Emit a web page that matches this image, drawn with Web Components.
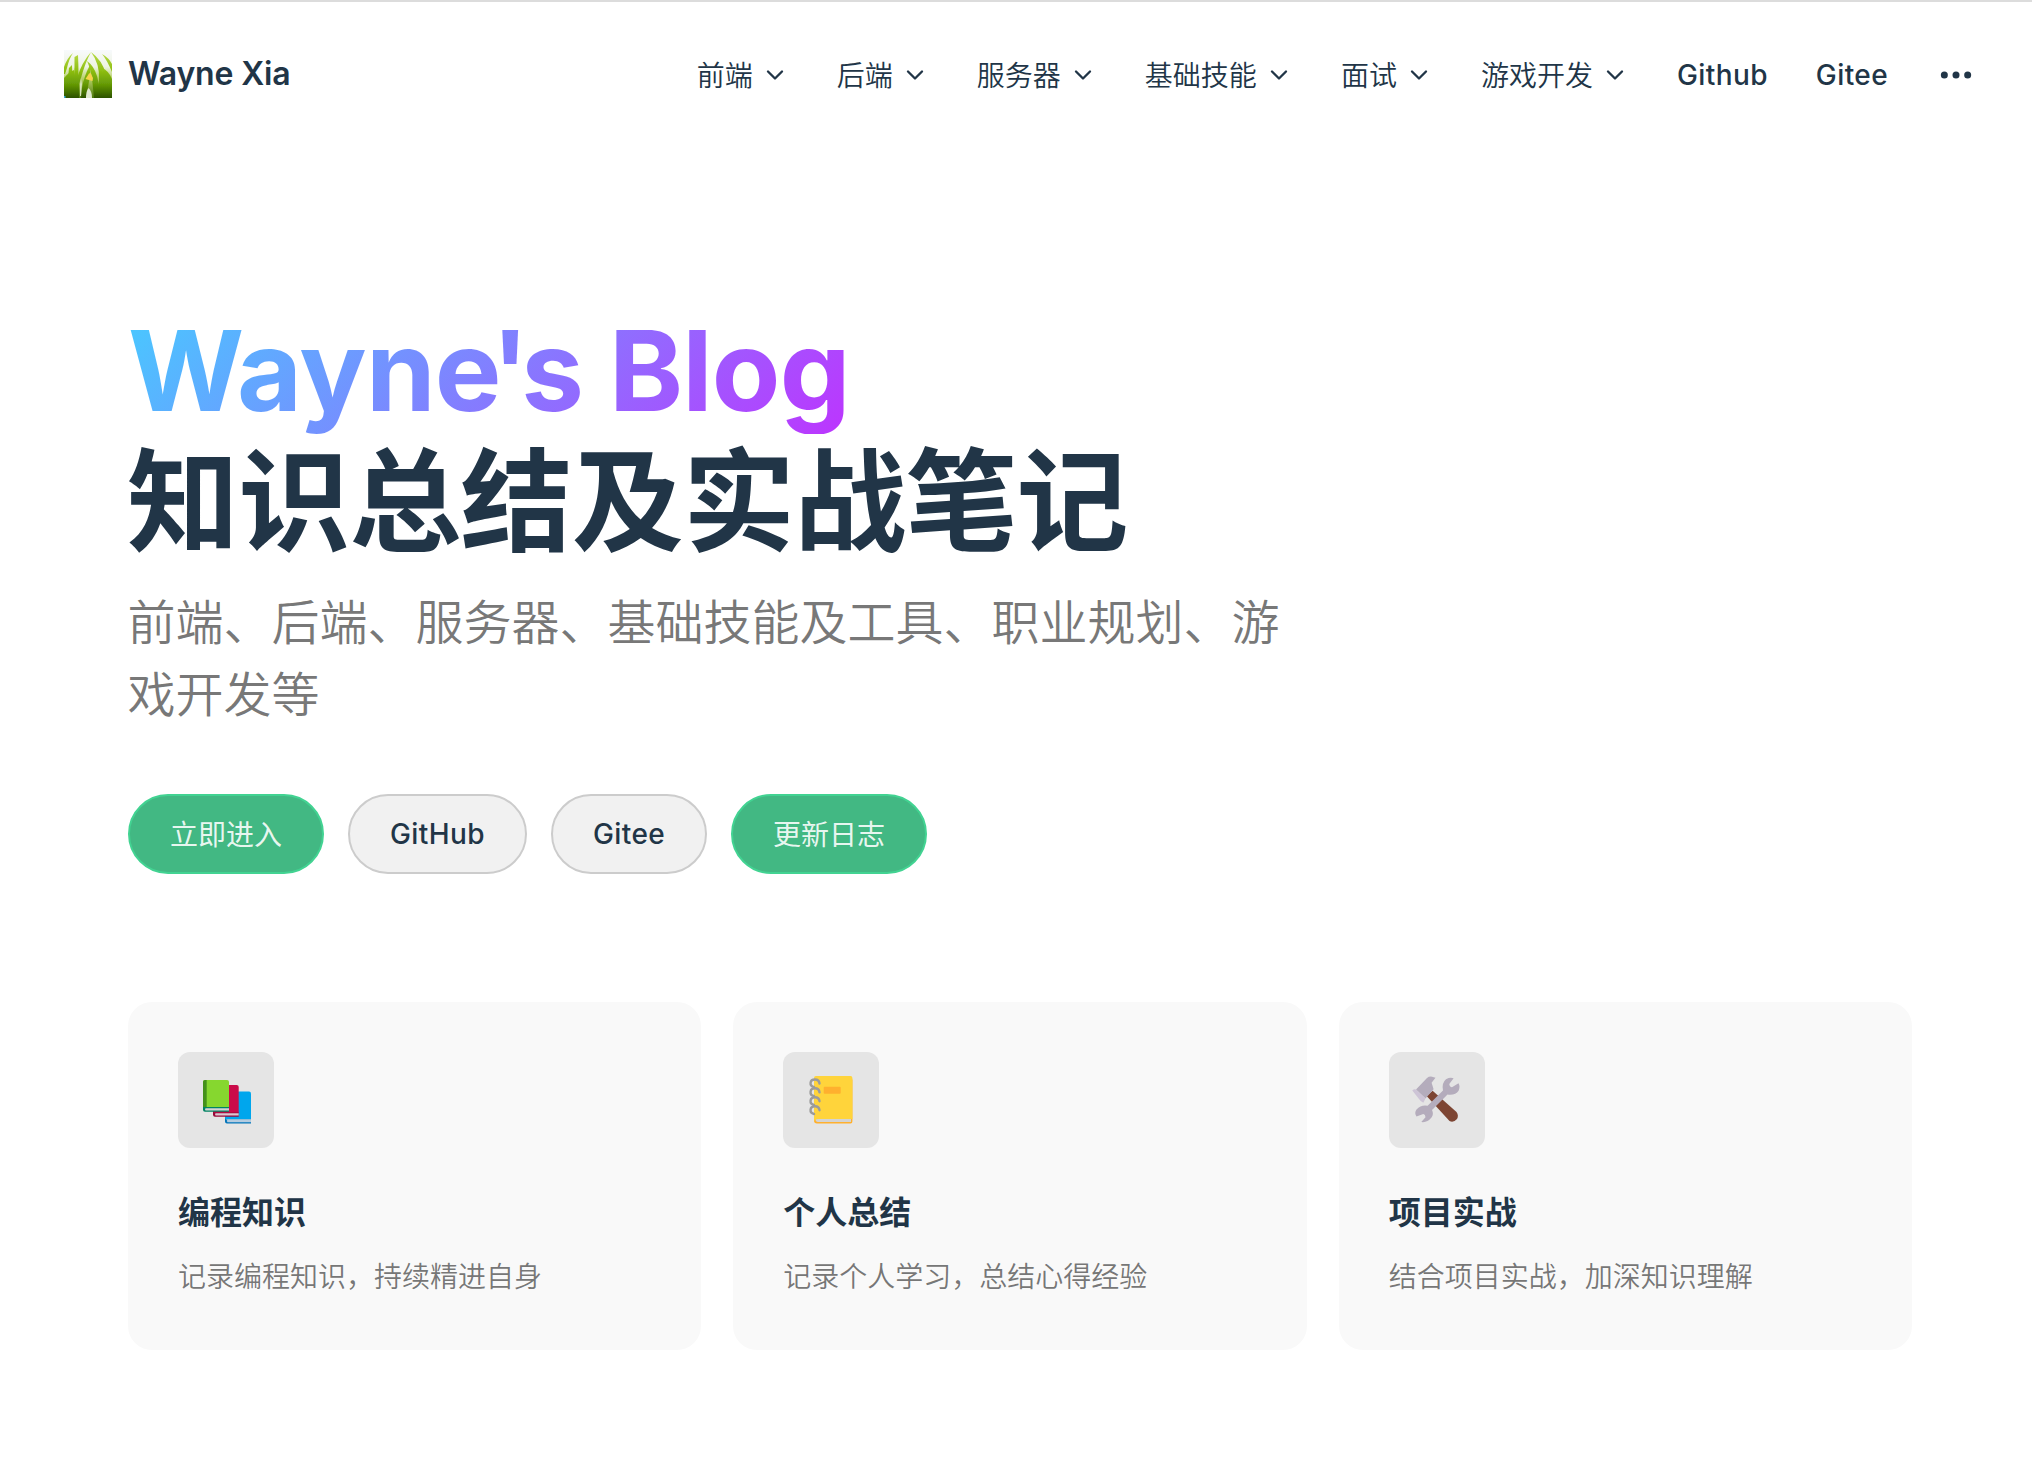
<!DOCTYPE html>
<html lang="zh-CN">
<head>
<meta charset="utf-8">
<title>Wayne Xia</title>
<style>
html,body{margin:0;background:#fff}
body{font-family:Inter,"Noto Sans CJK SC",sans-serif;color:#213547;font-size:28px;-webkit-font-smoothing:antialiased}
</style>
</head>
<body>
<blog-page></blog-page>
<script>
const define=(name,html,setup)=>customElements.define(name,class extends HTMLElement{
  constructor(){super();this.attachShadow({mode:'open'}).innerHTML=html;}
  connectedCallback(){if(setup)setup(this,this.shadowRoot);}
});

define('grass-logo',`<style>:host{display:block;width:48px;height:48px}svg{display:block}</style>
<svg width="48" height="48" viewBox="0 0 48 48">
<defs><linearGradient id="g" gradientUnits="userSpaceOnUse" x1="0" y1="2" x2="0" y2="48"><stop offset="0" stop-color="#b9dc4a"/><stop offset=".4" stop-color="#8fbf12"/><stop offset=".7" stop-color="#659a06"/><stop offset="1" stop-color="#2c5200"/></linearGradient>
<linearGradient id="h" x1="0" y1="0" x2="0" y2="1"><stop offset="0" stop-color="#f8fafc"/><stop offset=".35" stop-color="#eef4e2"/><stop offset=".6" stop-color="#b5d064"/><stop offset="1" stop-color="#4d7a0c"/></linearGradient>
<filter id="b" x="0" y="0" width="1" height="1"><feGaussianBlur stdDeviation=".6"/></filter></defs>
<rect width="48" height="48" fill="url(#h)"/>
<g fill="url(#g)" filter="url(#b)">
<path d="M0 17Q3 8 9 3Q5 9 3 18L1 24H0Z"/>
<path d="M0 48V28Q5 22 10 20L12 48Z"/>
<path d="M7 48Q11 28 10.500 7L14 5Q15 24 14 48Z"/>
<path d="M13 28Q18 12 27 2Q21 13 17 28L15 34V48H12Z"/>
<path d="M2 48L5 18L8 15L9 48Z"/>
<path d="M18 38Q20 26 26 15L26.500 22Q25 32 22 48H17Z"/>
<path d="M30 48L28 28Q26 17 23 11Q30 16 33 26L38 48Z"/>
<path d="M35 30Q36 14 27 2Q38 10 42 24L46 48H33Z"/>
<path d="M38 48V18Q45 21 48 29V48Z"/>
<path d="M48 22Q43 10 38 4Q45 8 48 14Z"/>
</g>
<path d="M22 48Q22 41 24.500 38Q28 41 28 48Z" fill="#dfe8ce" filter="url(#b)"/>
<path d="M16 34L17 28L18 34L17 46L16 46Z" fill="#d5e3b8" filter="url(#b)"/>
<path d="M25 23.500L26.500 23L29 28L28.500 31L25 30L21.500 29Z" fill="#f7d34a"/>
<path d="M0 46H1.500V48H0Z" fill="#35a9d6"/>
</svg>`);

define('site-brand',`<style>:host{display:flex;align-items:center;gap:16px;font-size:32px;font-weight:580;letter-spacing:-.15px;line-height:48px}</style><grass-logo></grass-logo><span><slot></slot></span>`);

define('nav-item',`<style>:host{display:flex;align-items:center;gap:8px;line-height:48px;font-size:28px;font-weight:450;letter-spacing:.4px;white-space:nowrap}
:host([menu]) .label{font-weight:350;letter-spacing:0;padding-top:1px;margin-bottom:-1px}svg{display:none;width:28px;height:28px}:host([menu]) svg{display:block}</style>
<span class="label"><slot></slot></span>
<svg viewBox="0 0 24 24"><path d="M6 9l6 6 6-6" fill="none" stroke="#213547" stroke-width="2" stroke-linecap="round" stroke-linejoin="round"/></svg>`);

define('more-menu',`<style>:host{display:flex;align-items:center}svg{display:block}</style>
<svg width="40" height="40" viewBox="0 0 24 24" fill="#213547"><circle cx="12" cy="12" r="2.100"/><circle cx="19" cy="12" r="2.100"/><circle cx="5" cy="12" r="2.100"/></svg>`);

define('site-nav',`<style>:host{display:flex;align-items:center;justify-content:space-between;height:144px;padding:0 56px 0 64px;box-sizing:border-box}
nav{display:flex;align-items:center;gap:48px;padding-top:2px}</style>
<site-brand>Wayne Xia</site-brand>
<nav><nav-item menu>前端</nav-item><nav-item menu>后端</nav-item><nav-item menu>服务器</nav-item><nav-item menu>基础技能</nav-item><nav-item menu>面试</nav-item><nav-item menu>游戏开发</nav-item><nav-item>Github</nav-item><nav-item>Gitee</nav-item><more-menu></more-menu></nav>`);

define('hero-button',`<style>:host{display:flex;align-items:center;justify-content:center;box-sizing:border-box;height:80px;padding:0 40px;border:2px solid #ccc;border-radius:40px;background:#f1f1f1;font-size:28px;font-weight:450;letter-spacing:.4px;line-height:76px;white-space:nowrap}
:host([brand]){background:#42b883;border-color:#42d392;color:rgba(255,255,255,.9);font-weight:400;letter-spacing:0}:host([brand]) span{margin-top:2px}</style><span><slot></slot></span>`);

define('hero-section',`<style>:host{display:block}
h1,p{margin:0}h1{font-size:112px;line-height:128px;font-weight:700;letter-spacing:-.8px}
h1>span{display:block;width:fit-content}
.name{background:linear-gradient(-45deg,#bd34fe,#47caff);-webkit-background-clip:text;background-clip:text;-webkit-text-fill-color:transparent}
.before{letter-spacing:-8px}.quote{letter-spacing:-8px}
.headline{padding-top:4px;margin:0 0 -4px -1px}
p{width:1154px;margin-left:-.5px;padding-top:25px;margin-bottom:-1px;font-size:48px;line-height:72px;font-weight:350;color:rgba(60,60,60,.7)}
div{display:flex;gap:24px;padding-top:64px}</style>
<h1><span class="name">Wayn<span class="before">e</span><span class="quote">'</span>s Blog</span><span class="headline">知识总结及实战笔记</span></h1>
<p>前端、后端、服务器、基础技能及工具、职业规划、游戏开发等</p>
<div><hero-button brand>立即进入</hero-button><hero-button>GitHub</hero-button><hero-button>Gitee</hero-button><hero-button brand>更新日志</hero-button></div>`);

const icons={
books:`<path d="M26 18.500H48Q50 18.500 50 20.500V46H24V20.500Q24 18.500 26 18.500Z" fill="#00a6ed"/><path d="M24 44Q24 46.500 26 46.500H50V50.500H26Q24 50.500 24 48.500Z" fill="#0074ba"/><path d="M26.500 46.500H50V49.300H26.500Q25 48 26.500 46.500Z" fill="#b4cce0"/>
<path d="M14 12H35.700Q37.700 12 37.700 14V40H12V14Q12 12 14 12Z" fill="#ca0b4a"/><path d="M12 38Q12 39.500 14 39.500H37.700V43.700H14Q12 43.700 12 41.700Z" fill="#990838"/><path d="M14.500 40.200H37.700V42.500H14.500Q13.500 41.300 14.500 40.200Z" fill="#dcc6d0"/>
<path d="M4 7H26Q28 7 28 9V34.500H2V9Q2 7 4 7Z" fill="#86d72f"/><path d="M4 7H5.700V35H2V9Q2 7 4 7Z" fill="#44911b"/><path d="M2 34H28V38.700H4Q2 38.700 2 36.700Z" fill="#008463"/><path d="M4.500 35.200H28V37.600H4.500Q3.500 36.500 4.500 35.200Z" fill="#d3d3d3"/>`,
note:`<path d="M8 5H44.500Q46.400 5 46.400 7V48.500Q46.400 50.400 44.500 50.400H11Q8 50.400 8 47.500Z" fill="#ffb02e"/><path d="M9.500 46H45V49H12Q9.500 49 9.500 46Z" fill="#d3d3d3"/><path d="M8 5Q8 3 10 3H44.500Q46.400 3 46.400 5V46H12Q9.500 46 8.500 48L8 46Z" fill="#ffd43b"/><rect x="17.700" y="13.700" width="17" height="7" rx="1" fill="#ffb02e"/><g transform="translate(1 0)" fill="none" stroke="#9b9b9b" stroke-width="2.400" stroke-linecap="round"><path d="M7 14C2 13 2.500 6.500 8 6.500Q12 6.500 12.500 10.500"/><path d="M7 23C2 22 2.500 15.300 8 15.300Q12 15.300 12.500 19.300"/><path d="M7 32C2 31 2.500 24.200 8 24.200Q12 24.200 12.500 28.200"/><path d="M7 41C2 40 2.500 33.200 8 33.200Q12 33.200 12.500 37.200"/></g>`,
tools:`<path d="M15.600 23L21.600 17.700L45.500 39Q48 42.500 46 46Q42.500 50 38.500 48Z" fill="#7d4533"/><path d="M5 16.500L16 5Q18 3.300 21 3.700L24.500 4.700L20.600 9.700L22.600 16.300L14.500 25.500Z" fill="#b4acbc"/><path d="M1.300 17.500Q3 15.500 5 16.500L14.500 25.500L12.300 29.700Q10 29 8 26Z" fill="#cdc4d6"/><path d="M16.600 32.700L32 17.500Q30.500 10 35 6.300Q39 4 42.600 5.300L38.300 11Q38.500 14 41 14.300L47.500 10.300Q49.500 13.500 47.600 17.700Q44.500 22.500 36.500 21.500L21 37Q23 41 20.500 44.500Q16 50 10.300 49L14.500 44.300Q14.500 41.500 12.300 41L5.500 43.500Q3 40 5.500 36.500Q10 31.500 16.600 32.700Z" fill="#b4acbc"/>`
};
define('feature-card',`<style>:host{display:block;flex:1 1 0;box-sizing:border-box;height:348px;padding:50px;border-radius:24px;background:#f9f9f9}
.icon{display:flex;align-items:center;justify-content:center;width:96px;height:96px;border-radius:12px;background:#e5e5e5}
.icon svg{margin-right:1px}
h2{margin:41px 0 0;font-size:32px;line-height:48px;font-weight:700}
p{margin:0;padding-top:16px;font-size:28px;line-height:48px;font-weight:350;color:rgba(60,60,60,.7)}</style>
<div class="icon"></div><h2><slot name="title"></slot></h2><p><slot></slot></p>`,
(el,root)=>{root.querySelector('.icon').innerHTML='<svg width="50" height="54" viewBox="0 0 50 54" style="overflow:visible">'+icons[el.getAttribute('icon')]+'</svg>';});

define('feature-list',`<style>:host{display:flex;gap:32px;padding-top:128px}</style>
<feature-card icon="books"><span slot="title">编程知识</span>记录编程知识，持续精进自身</feature-card>
<feature-card icon="note"><span slot="title">个人总结</span>记录个人学习，总结心得经验</feature-card>
<feature-card icon="tools"><span slot="title">项目实战</span>结合项目实战，加深知识理解</feature-card>`);

define('blog-page',`<style>:host{display:block;box-sizing:border-box;height:1468px;border-top:2px solid #dcdcdc;overflow:hidden}main{padding:160px 120px 0 128px}</style>
<site-nav></site-nav><main><hero-section></hero-section><feature-list></feature-list></main>`);
</script>
</body>
</html>
